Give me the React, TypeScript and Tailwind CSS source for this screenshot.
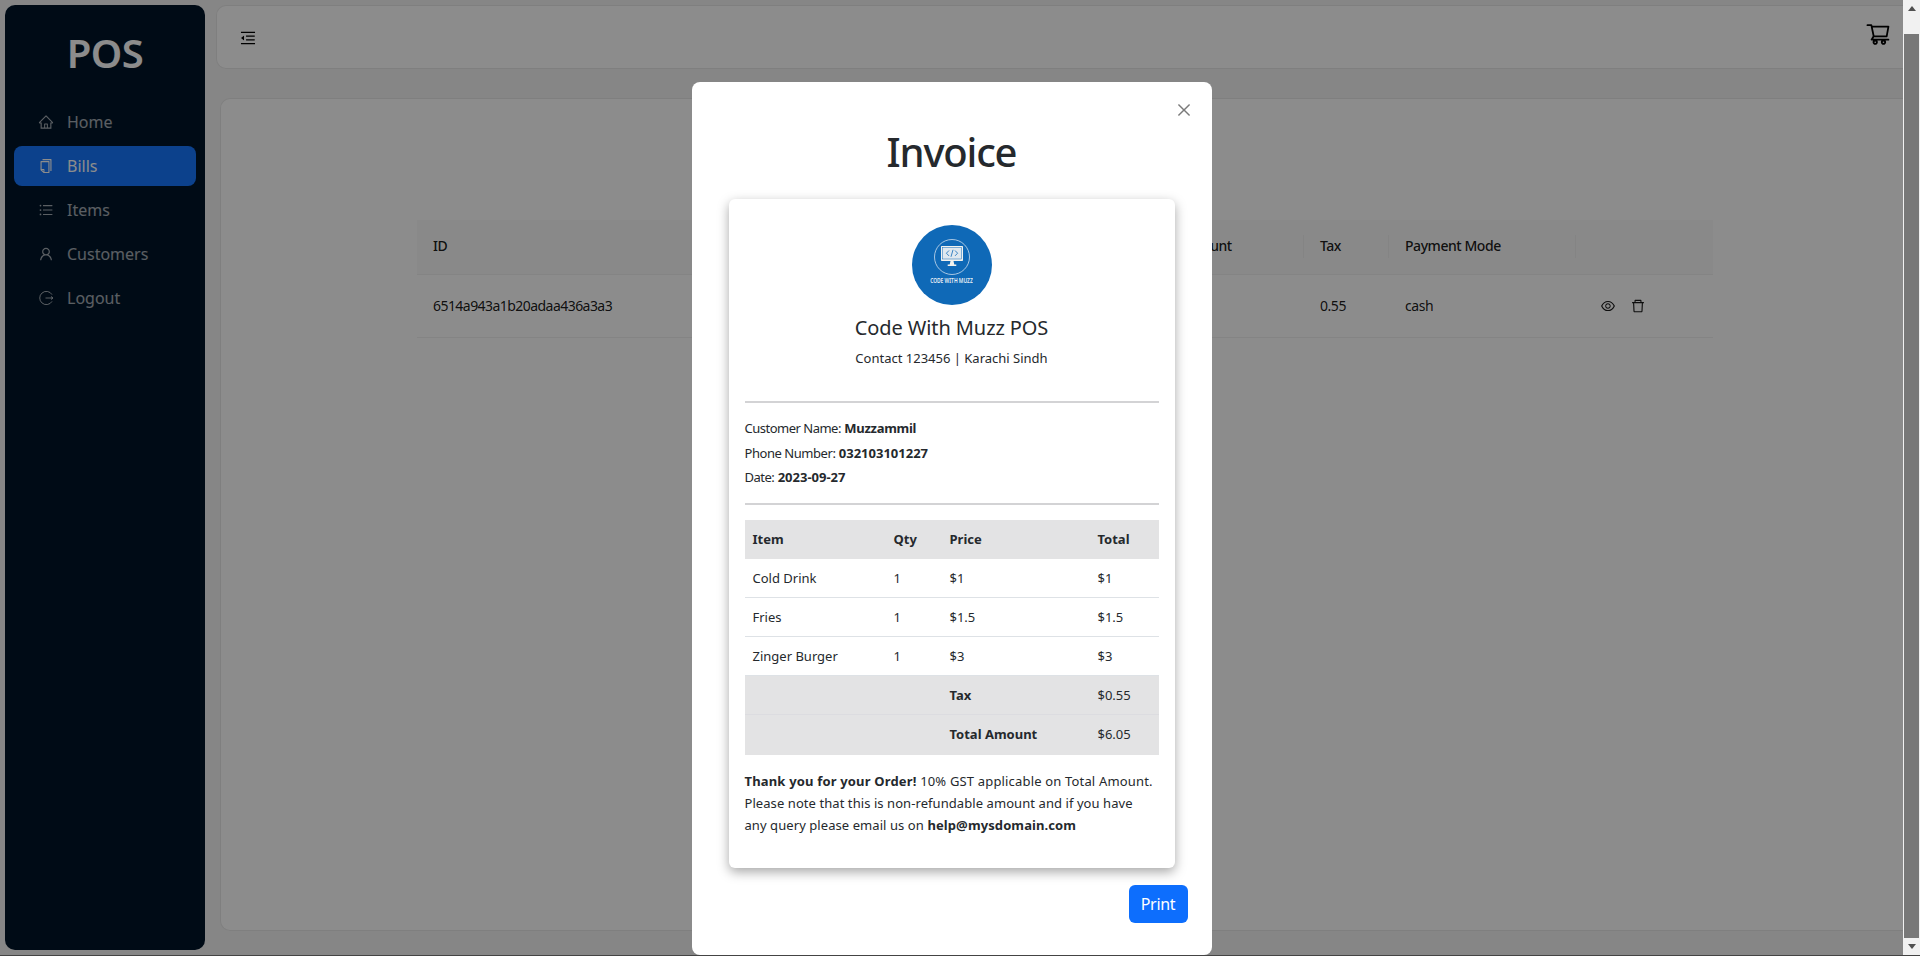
import {
  AiOutlineClose,
  AiOutlineCopy,
  AiOutlineDelete,
  AiOutlineEye,
  AiOutlineHome,
  AiOutlineMenuFold,
  AiOutlineShoppingCart,
  AiOutlineUnorderedList,
  AiOutlineUser,
} from "react-icons/ai";

const FONT = "font-['Noto_Sans','Open_Sans',sans-serif]";

function LogoutIcon({ className }: { className?: string }) {
  return (
    <svg viewBox="0 0 16 16" className={className} fill="none" stroke="currentColor" strokeWidth="1">
      <path d="M14 4.6A6.6 6.6 0 1 0 14 11.4" />
      <path d="M7.5 8h7.5M13 6.4 14.8 8 13 9.6" />
    </svg>
  );
}

const NAV_LINKS = [
  { label: "Home", icon: AiOutlineHome },
  { label: "Bills", icon: AiOutlineCopy, active: true },
  { label: "Items", icon: AiOutlineUnorderedList },
  { label: "Customers", icon: AiOutlineUser },
  { label: "Logout", icon: LogoutIcon },
];

const BILL_COLUMNS = [
  { label: "ID", width: "w-[285px]" },
  { label: "Customer Name", width: "w-[205px]" },
  { label: "Contact", width: "w-[224px]" },
  { label: "Total Amount", width: "w-[173px]" },
  { label: "Tax", width: "w-[85px]" },
  { label: "Payment Mode", width: "w-[187px]" },
  { label: "", width: "w-[137px]" },
];

const ORDER_ITEMS = [
  { name: "Cold Drink", qty: 1, price: "$1", total: "$1" },
  { name: "Fries", qty: 1, price: "$1.5", total: "$1.5" },
  { name: "Zinger Burger", qty: 1, price: "$3", total: "$3" },
];

function Sidebar() {
  return (
    <aside className="my-[5px] ml-[5px] w-[200px] shrink-0 rounded-[10px] bg-[#001529]">
      <div className="flex h-[97px] items-center justify-center pb-[1px] text-[40px] font-semibold tracking-[-0.5px] text-white">
        POS
      </div>
      <nav className="flex flex-col gap-1 px-[9px]">
        {NAV_LINKS.map(({ label, icon: Icon, active }) => (
          <div
            key={label}
            className={`flex h-10 items-center gap-[13px] rounded-lg pl-[24px] text-base ${
              active ? "bg-[#1677ff] text-white" : "text-white/65"
            }`}
          >
            <Icon className="h-4 w-4" />
            {label}
          </div>
        ))}
      </nav>
    </aside>
  );
}

function BillsTable() {
  return (
    <table className="ml-[196px] mt-[121px] w-[1296px] table-fixed border-collapse text-sm tracking-[-0.45px] text-black/90">
      <thead>
        <tr className="h-[54px] border-b border-[#f0f0f0] bg-[#fafafa]">
          {BILL_COLUMNS.map(({ label, width }, i) => (
            <th key={i} className={`${width} relative px-4 pb-[2px] text-left font-medium`}>
              {label}
              {i < BILL_COLUMNS.length - 1 && (
                <span className="absolute right-0 top-[15px] h-[23px] w-px bg-[#f0f0f0]" />
              )}
            </th>
          ))}
        </tr>
      </thead>
      <tbody>
        <tr className="h-[63px] border-b border-[#f0f0f0]">
          <td className="px-4 tracking-[-0.55px]">6514a943a1b20adaa436a3a3</td>
          <td className="px-4">Muzzammil</td>
          <td className="px-4">032103101227</td>
          <td className="px-4">6.05</td>
          <td className="px-4">0.55</td>
          <td className="px-4">cash</td>
          <td className="px-4">
            <div className="flex items-center gap-[14px] pl-[8px]">
              <AiOutlineEye className="h-4 w-4" />
              <AiOutlineDelete className="h-4 w-4" />
            </div>
          </td>
        </tr>
      </tbody>
    </table>
  );
}

function LogoMark() {
  return (
    <div className="flex h-20 w-20 flex-col items-center overflow-hidden rounded-full bg-[#0f69b7] pt-[13px]">
      <svg viewBox="0 0 38 38" className="h-[38px] w-[38px] shrink-0" fill="none">
        <circle cx="19" cy="19" r="17.5" stroke="#e8eef5" strokeWidth="0.7" />
        <rect x="8" y="8" width="22" height="15" rx="0.8" fill="#f2f2ee" />
        <rect x="9.5" y="9.5" width="19" height="11.5" fill="#dfe8ef" stroke="#0f69b7" strokeWidth="0.5" />
        <path d="M16 12.5l-2.6 2.7 2.6 2.7M22 12.5l2.6 2.7-2.6 2.7M20 11.8l-2 7" stroke="#0f69b7" strokeWidth="0.8" />
        <path d="M17.5 23h3l.8 3.5h2v1.5h-8.6v-1.5h2z" fill="#f2f2ee" />
      </svg>
      <span className="mt-[1px] scale-x-[0.7] whitespace-nowrap text-[7px] font-semibold leading-[8px] text-[#e8eef5]">
        CODE WITH MUZZ
      </span>
    </div>
  );
}

function InvoiceCard() {
  return (
    <div className="mx-auto mt-[18px] h-[669px] w-[446px] rounded-md bg-white px-[16px] pt-[26px] shadow-[0_4px_12px_rgba(0,0,0,0.35)]">
      <div className="flex flex-col items-center">
        <LogoMark />
        <h4 className="mt-[9px] text-[20px] leading-[28px] tracking-[-0.1px]">Code With Muzz POS</h4>
        <p className="mt-[6px] text-[13px] leading-[20px]">Contact 123456 | Karachi Sindh</p>
      </div>
      <hr className="mt-[33px] border-t-2 border-[#d3d3d5]" />
      <div className="mt-[13px] text-[13px] leading-[24.5px]">
        <div>
          <span className="tracking-[-0.5px]">Customer Name:</span> <b className="tracking-[-0.3px]">Muzzammil</b>
        </div>
        <div>
          <span className="tracking-[-0.45px]">Phone Number:</span> <b>032103101227</b>
        </div>
        <div>
          <span className="tracking-[-0.5px]">Date:</span> <b>2023-09-27</b>
        </div>
      </div>
      <hr className="mt-[13px] border-t-2 border-[#d3d3d5]" />
      <table className="mt-[15px] w-full table-fixed border-collapse text-[13px]">
        <thead>
          <tr className="h-[39px] bg-[#e3e3e4] font-bold">
            <th className="w-[141px] px-2 pt-[2px] text-left">Item</th>
            <th className="w-[56px] px-2 pt-[2px] text-left">Qty</th>
            <th className="w-[148px] px-2 pt-[2px] text-left">Price</th>
            <th className="px-2 pt-[2px] text-left">Total</th>
          </tr>
        </thead>
        <tbody>
          {ORDER_ITEMS.map((item) => (
            <tr key={item.name} className="h-[39px] border-b border-[#dee2e6]">
              <td className="px-2 pt-[2px]">{item.name}</td>
              <td className="px-2 pt-[2px]">{item.qty}</td>
              <td className="px-2 pt-[2px]">{item.price}</td>
              <td className="px-2 pt-[2px]">{item.total}</td>
            </tr>
          ))}
          <tr className="h-[39px] border-b border-[#dcdce0] bg-[#e3e3e4]">
            <td />
            <td />
            <td className="px-2 pt-[2px] font-bold">Tax</td>
            <td className="px-2 pt-[2px]">$0.55</td>
          </tr>
          <tr className="h-[40px] bg-[#e3e3e4]">
            <td />
            <td />
            <td className="px-2 font-bold">Total Amount</td>
            <td className="px-2">$6.05</td>
          </tr>
        </tbody>
      </table>
      <p className="mt-[15px] text-[13px] leading-[22px] tracking-[0.17px]">
        <b>Thank you for your Order!</b> 10% GST applicable on Total Amount.{" "}
        <span className="tracking-[0.07px]">
          Please note that this is non-refundable amount and if you have
          <br />
          any query please email us on
        </span>{" "}
        <b className="tracking-[0.1px]">help@mysdomain.com</b>
      </p>
    </div>
  );
}

function InvoiceModal() {
  return (
    <div className="relative mx-auto mt-[82px] h-[873px] w-[520px] rounded-lg bg-white text-[#25292d]">
      <button className="absolute right-[19px] top-[19px] text-[#7a7a7a]" aria-label="Close">
        <AiOutlineClose className="h-[18px] w-[18px]" />
      </button>
      <h1 className="pt-[41px] text-center text-[40px] font-medium leading-[58px] tracking-[-1.2px]">Invoice</h1>
      <InvoiceCard />
      <div className="mr-6 mt-[17px] flex justify-end">
        <button className="h-[38px] w-[59px] rounded-md bg-[#0d6efd] text-base tracking-[-0.3px] text-white">Print</button>
      </div>
    </div>
  );
}

function FakeScrollbar() {
  return (
    <div className="flex w-[17px] shrink-0 flex-col items-center bg-[#f1f1f1]">
      <div className="flex h-[17px] items-center justify-center">
        <span className="h-0 w-0 border-x-[4px] border-b-[5px] border-x-transparent border-b-[#505050]" />
      </div>
      <div className="mt-[17px] h-[904px] w-[15px] bg-[#787878]" />
      <div className="flex flex-1 items-center justify-center">
        <span className="h-0 w-0 border-x-[4px] border-t-[5px] border-x-transparent border-t-[#505050]" />
      </div>
    </div>
  );
}

export default function App() {
  return (
    <div className={`${FONT} relative h-[956px] w-[1920px] overflow-hidden bg-[#f5f5f5]`}>
      <div className="flex h-[955px]">
        <Sidebar />
        <main className="min-w-0 flex-1">
          <header className="ml-[11px] mt-[5px] flex h-[64px] items-center justify-between rounded-l-[10px] border border-r-0 border-[#e8e8e8] bg-white pl-[22px] pr-[29px]">
            <AiOutlineMenuFold className="mt-[2px] h-[18px] w-[18px] text-black" />
            <AiOutlineShoppingCart className="-mt-[6px] h-[26px] w-[26px] text-black" />
          </header>
          <section className="ml-[15px] mt-[29px] h-[833px] rounded-l-[10px] border border-r-0 border-[#e8e8e8] bg-white">
            <BillsTable />
          </section>
        </main>
      </div>
      <div className="h-px bg-[#444444]" />
      <div className="absolute inset-x-0 top-0 flex h-[955px]">
        <div className="flex-1 bg-black/45">
          <InvoiceModal />
        </div>
        <FakeScrollbar />
      </div>
    </div>
  );
}
